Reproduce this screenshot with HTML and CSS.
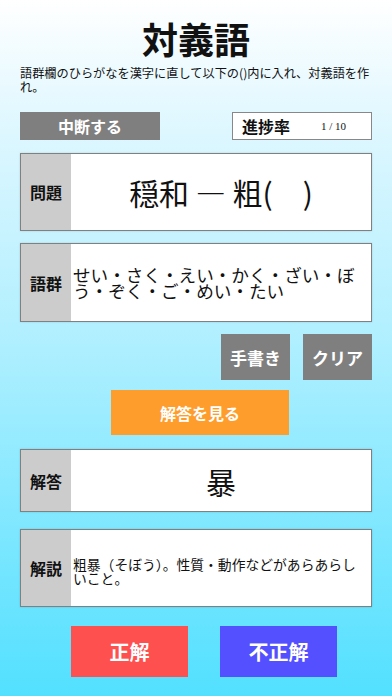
FILE: index.html
```html
<!DOCTYPE html>
<html lang="ja">
<head>
    <meta charset="UTF-8">
    <meta name="viewport" content="width=device-width, initial-scale=1.0">
    <title>対義語</title>
    <link rel="stylesheet" href="styles.css">
</head>
<body>
    <div class="container">
        <h1>対義語</h1>
        <p class="guide">語群欄のひらがなを漢字に直して以下の()内に入れ、対義語を作れ。</p>

        <div class="top-row">
            <button class="btn gray stop">中断する</button>
            <div class="progress">
                <span class="progress-label">進捗率</span>
                <span class="progress-value">1 / 10</span>
            </div>
        </div>

        <div class="box question">
            <div class="label">問題</div>
            <div class="content big">穏和 — 粗(　)</div>
        </div>

        <div class="box words">
            <div class="label">語群</div>
            <div class="content list">せい・さく・えい・かく・ざい・ぼう・ぞく・ご・めい・たい</div>
        </div>

        <div class="tools">
            <button class="btn gray tool">手書き</button>
            <button class="btn gray tool">クリア</button>
        </div>

        <button class="btn show">解答を見る</button>

        <div class="box answer">
            <div class="label">解答</div>
            <div class="content big">暴</div>
        </div>

        <div class="box note">
            <div class="label">解説</div>
            <div class="content small">粗暴（そぼう）。性質・動作などがあらあらしいこと。</div>
        </div>

        <div class="judge">
            <button class="btn ok">正解</button>
            <button class="btn ng">不正解</button>
        </div>
    </div>
</body>
</html>
```

FILE: styles.css
```css
body {
    margin: 0;
    padding: 0;
    height: 696px;
    overflow: hidden;
    font-family: "Noto Sans CJK JP", "Noto Sans", sans-serif;
    color: #111;
    background: linear-gradient(to bottom, #ffffff 0%, #dff7ff 18%, #aeefff 50%, #52e0ff 100%);
}
.container {
    padding: 0 20px;
}
h1 {
    margin: 0;
    padding-top: 18px;
    font-size: 36px;
    line-height: 40px;
    font-weight: bold;
    text-align: center;
}
.guide {
    margin: 9px 0 0;
    font-size: 12.2px;
    line-height: 13.5px;
}
.btn {
    font-family: inherit;
    border: none;
    padding: 0;
    color: #fff;
    font-weight: bold;
    cursor: pointer;
}
.gray {
    background-color: #7f7f7f;
}
.top-row {
    display: flex;
    justify-content: space-between;
    margin-top: 18px;
    height: 28px;
}
.stop {
    width: 140px;
    height: 28px;
    font-size: 16px;
}
.progress {
    width: 138px;
    height: 26px;
    background: #fff;
    border: 1px solid #888;
    display: flex;
    align-items: center;
}
.progress-label {
    margin-left: 9px;
    font-size: 16px;
    font-weight: bold;
}
.progress-value {
    margin-left: 31px;
    font-family: "Liberation Serif", serif;
    font-size: 11px;
}
.box {
    display: flex;
    background: #fff;
    border: 1px solid #808080;
    box-shadow: 0 0 2px rgba(0, 0, 0, 0.15);
}
.label {
    width: 50px;
    flex-shrink: 0;
    background: #cccccc;
    display: flex;
    align-items: center;
    justify-content: center;
    font-size: 16px;
    font-weight: bold;
}
.content {
    flex: 1;
    display: flex;
    align-items: center;
}
.big {
    justify-content: center;
    font-size: 30px;
}
.question {
    margin-top: 13px;
    height: 76px;
}
.words {
    margin-top: 12px;
    height: 77px;
}
.list {
    padding-left: 2px;
    font-size: 17.6px;
    line-height: 16px;
}
.tools {
    display: flex;
    justify-content: flex-end;
    gap: 13px;
    margin-top: 12px;
}
.tool {
    width: 69px;
    height: 46px;
    font-size: 17px;
}
.show {
    display: block;
    margin: 10px 0 0 91px;
    width: 178px;
    height: 45px;
    background-color: #ff9d2c;
    font-size: 16px;
}
.answer {
    margin-top: 14px;
    height: 61px;
}
.note {
    margin-top: 17px;
    height: 76px;
}
.small {
    padding: 6px 8px 0 2px;
    box-sizing: border-box;
    font-size: 13.8px;
    line-height: 14.5px;
}
.judge {
    display: flex;
    margin-top: 19px;
    padding-left: 51px;
    gap: 32px;
}
.ok, .ng {
    width: 117px;
    height: 51px;
    font-size: 20px;
}
.ok {
    background-color: #ff5050;
}
.ng {
    background-color: #5450ff;
}
```
